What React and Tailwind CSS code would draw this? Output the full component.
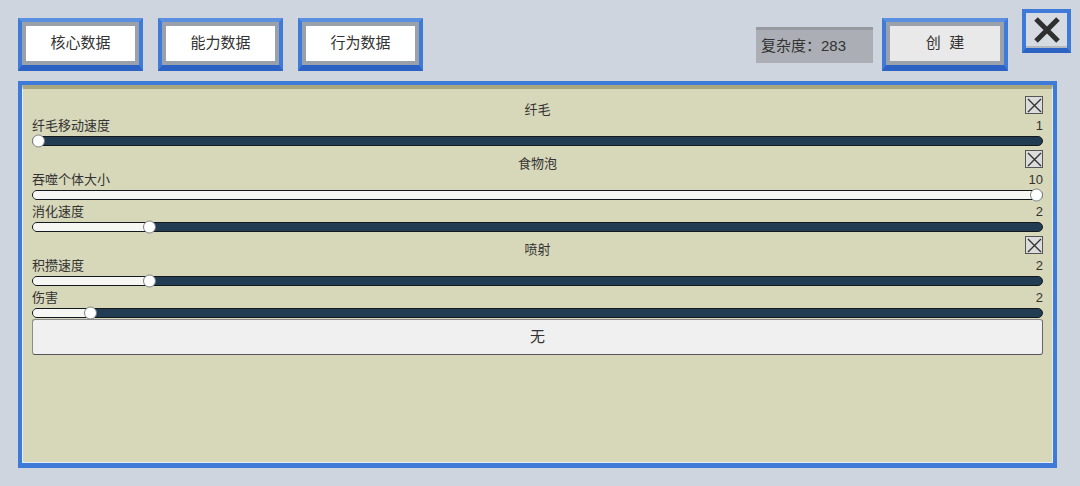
import React from "react";

const sections = [
  { title: "纤毛", rows: [{ label: "纤毛移动速度", value: 1, pct: 0 }] },
  {
    title: "食物泡",
    rows: [
      { label: "吞噬个体大小", value: 10, pct: 1 },
      { label: "消化速度", value: 2, pct: 0.111 },
    ],
  },
  {
    title: "喷射",
    rows: [
      { label: "积攒速度", value: 2, pct: 0.111 },
      { label: "伤害", value: 2, pct: 0.052 },
    ],
  },
];

const FrameButton = ({ children, inner, className = "" }) => (
  <div
    className={`h-[53px] border-x-4 border-t-4 border-b-[6px] border-[#3e7bd8] border-t-[#5b90e0] border-b-[#2b62c4] ${className}`}
  >
    <div
      className={`h-full border-4 border-[#9ba1aa] ${inner} flex items-center justify-center text-[15px] text-[#333]`}
    >
      {children}
    </div>
  </div>
);

const Checkbox = () => (
  <div className="w-[18px] h-[18px] border-[1.5px] border-[#555] bg-[#dcdcdc] flex items-center justify-center">
    <svg width="15" height="15" viewBox="0 0 15 15">
      <path d="M1 1L14 14M14 1L1 14" stroke="#333" strokeWidth="1.4" />
    </svg>
  </div>
);

const Slider = ({ pct }) => (
  <div className="relative h-[10px] mt-[3px]">
    <div className="h-full rounded-full border border-[#14191d] bg-[#223d53] overflow-hidden">
      <div
        className="h-full bg-[#f6f6f3]"
        style={{ width: `calc(${pct} * (100% - 13px) + 6px)` }}
      />
    </div>
    <div
      className="absolute top-1/2 -translate-y-1/2 w-[13px] h-[13px] rounded-full bg-white border border-[#7d8388]"
      style={{ left: `calc(${pct} * (100% - 13px))` }}
    />
  </div>
);

const App = () => {
  return (
    <div
      className="w-full h-[486px] bg-[#cfd5df] flex flex-col text-[#333]"
      style={{ fontFamily: '"Liberation Sans", "Noto Sans CJK SC", sans-serif' }}
    >
      {/* top bar */}
      <div className="h-[81px] flex items-start pl-[18px] pr-[9px] shrink-0">
        <div className="flex gap-[15px] mt-[18px]">
          <FrameButton inner="bg-white" className="w-[125px]">核心数据</FrameButton>
          <FrameButton inner="bg-white" className="w-[125px]">能力数据</FrameButton>
          <FrameButton inner="bg-white" className="w-[125px]">行为数据</FrameButton>
        </div>
        <div className="ml-auto flex items-start">
          <div className="mt-[27px] w-[117px] h-[36px] bg-[#abafb5] border-t-[3px] border-[#979ba1] pl-[5px] flex items-center text-[15px] text-[#333]">
            复杂度：283
          </div>
          <FrameButton inner="bg-[#e9e9e9]" className="w-[126px] mt-[18px] ml-[9px]">
            创&nbsp;&nbsp;建
          </FrameButton>
          <div className="mt-[9px] ml-[14px] w-[49px] h-[44px] border-x-4 border-t-4 border-b-[5px] border-[#3e7bd8] border-b-[#2b62c4]">
            <div className="h-full bg-[#d6dae1] border-b-2 border-[#b4b9c0] flex items-center justify-center">
              <svg width="28" height="28" viewBox="0 0 28 28">
                <path d="M3 3L25 25M25 3L3 25" stroke="#2f2f2f" strokeWidth="5" />
              </svg>
            </div>
          </div>
        </div>
      </div>

      {/* panel */}
      <div className="flex-1 ml-[18px] mr-[23px] mb-[18px] border-4 border-b-[5px] border-[#3e7bd8] flex flex-col">
        <div className="flex-1 bg-[#d7d7ba] border-x border-b border-[#e4ecf6] border-t-4 border-t-[#a9a67f] pt-[7px] px-[9px]">
          {sections.map((s, i) => (
            <div key={i} className={i === 0 ? "" : "mt-[4px]"}>
              <div className="grid grid-cols-[18px_1fr_18px] h-[19px]">
                <div />
                <div className="text-center pt-[7px] text-[13px] leading-[13px]">{s.title}</div>
                <Checkbox />
              </div>
              {s.rows.map((r, j) => (
                <div key={j} className={j === 0 ? "mt-[4px]" : "mt-[5px]"}>
                  <div className="flex justify-between h-[14px] text-[13px] leading-[14px]">
                    <span>{r.label}</span>
                    <span>{r.value}</span>
                  </div>
                  <Slider pct={r.pct} />
                </div>
              ))}
            </div>
          ))}
          <button className="mt-[1px] w-full h-[36px] bg-[#f0f0f0] border border-[#8c8c8c] border-b-[#555] border-r-[#666] rounded-[3px] text-[15px] text-[#333]">
            无
          </button>
        </div>
      </div>
    </div>
  );
};

export default App;
